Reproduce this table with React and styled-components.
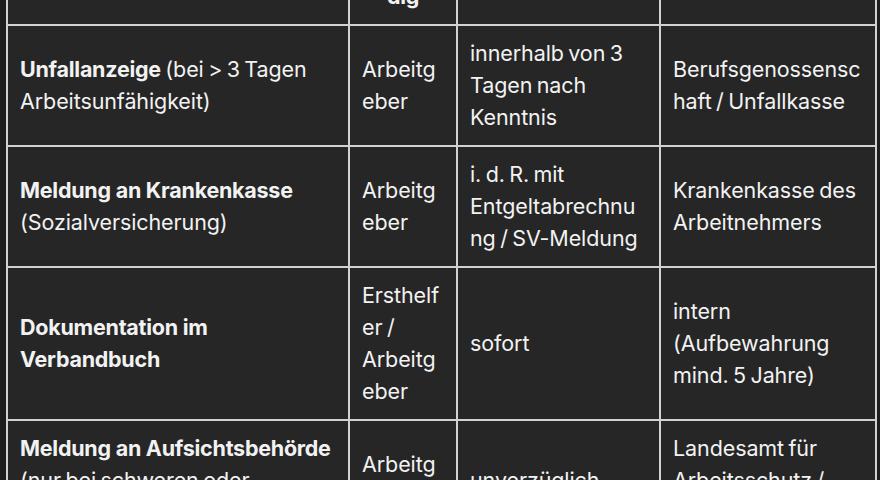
import React, { useLayoutEffect, useRef } from 'react';
import styled, { createGlobalStyle } from 'styled-components';

const GlobalStyle = createGlobalStyle`
  html, body {
    margin: 0;
    padding: 0;
    background: #1e1e1e;
  }
  body {
    font-family: Inter, 'Liberation Sans', sans-serif;
    color: #f2f2f2;
  }
`;

const Viewport = styled.div`
  height: 100vh;
  overflow: hidden;
  padding: 0 5px 0 6px;
  box-sizing: border-box;
`;

const Table = styled.table`
  width: 100%;
  border-collapse: collapse;
  table-layout: fixed;
  background: #262626;
  font-size: 21.5px;
  line-height: 32px;
  letter-spacing: -0.1px;
  word-spacing: -1.5px;
  margin-bottom: 200px;
`;

const Cell = styled.td`
  border: 2px solid #d2d2d2;
  padding: 11px 12px 12px;
  vertical-align: middle;
  text-align: left;
  overflow-wrap: break-word;
`;

const HeadCell = styled(Cell).attrs({ as: 'th' })`
  font-weight: 700;
  text-align: center;
  letter-spacing: -0.25px;
  word-spacing: 0;
`;

const Strong = styled.b`
  font-weight: 700;
  letter-spacing: -0.25px;
  word-spacing: 0;
`;

const rows = [
  {
    title: 'Unfallanzeige',
    note: ' (bei > 3 Tagen Arbeitsunfähigkeit)',
    who: 'Arbeitgeber',
    when: 'innerhalb von 3 Tagen nach Kenntnis',
    to: 'Berufsgenossenschaft / Unfallkasse',
  },
  {
    title: 'Meldung an Krankenkasse',
    note: ' (Sozialversicherung)',
    who: 'Arbeitgeber',
    when: 'i. d. R. mit Entgeltabrechnung / SV-Meldung',
    to: 'Krankenkasse des Arbeitnehmers',
  },
  {
    title: 'Dokumentation im Verbandbuch',
    note: '',
    who: 'Ersthelfer / Arbeitgeber',
    when: 'sofort',
    to: 'intern (Aufbewahrung mind. 5 Jahre)',
  },
  {
    title: 'Meldung an Aufsichtsbehörde',
    note: ' (nur bei schweren oder tödlichen Unfällen)',
    who: 'Arbeitgeber',
    when: 'unverzüglich',
    to: 'Landesamt für Arbeitsschutz / Gewerbeaufsicht',
  },
];

function App() {
  const viewRef = useRef(null);
  const headRef = useRef(null);

  // the view is scrolled so the header row ends just below the top edge
  useLayoutEffect(() => {
    if (viewRef.current && headRef.current) {
      viewRef.current.scrollTop = headRef.current.offsetHeight - 24;
    }
  }, []);

  return (
    <Viewport ref={viewRef}>
      <GlobalStyle />
      <Table>
        <colgroup>
          <col style={{ width: 342 }} />
          <col style={{ width: 108 }} />
          <col style={{ width: 203 }} />
          <col style={{ width: 216 }} />
        </colgroup>
        <thead ref={headRef}>
          <tr>
            <HeadCell>Meldung</HeadCell>
            <HeadCell>Zuständig</HeadCell>
            <HeadCell>Frist</HeadCell>
            <HeadCell>Empfänger</HeadCell>
          </tr>
        </thead>
        <tbody>
          {rows.map(row => (
            <tr key={row.title}>
              <Cell>
                <Strong>{row.title}</Strong>
                {row.note}
              </Cell>
              <Cell>{row.who}</Cell>
              <Cell>{row.when}</Cell>
              <Cell>{row.to}</Cell>
            </tr>
          ))}
        </tbody>
      </Table>
    </Viewport>
  );
}

export default App;
